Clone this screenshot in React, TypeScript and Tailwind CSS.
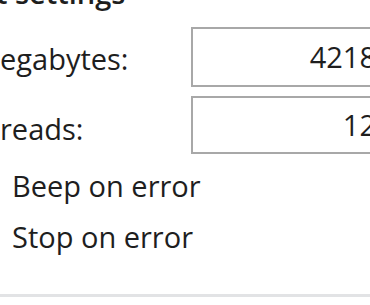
export default function App() {
    return (
        <div className="w-[370px] h-[305px] overflow-hidden bg-white text-[#1e1e1e] font-['Open_Sans',sans-serif]">
            <div className="flex flex-col">
                <h2 className="text-[29px] font-semibold leading-[40px] -mt-[27px] -ml-[4px]">
                    t settings
                </h2>

                <div className="flex items-center mt-[14px] h-[60px]">
                    <span className="w-[191px] text-[29px] leading-none pt-[3px]">egabytes:</span>
                    <div className="flex-1 h-[60px] border-2 border-[#a8a8a8] flex items-center justify-end -mr-[12px] pr-[4px] text-[29px]">
                        4218
                    </div>
                </div>

                <div className="flex items-center mt-[9px] h-[58px]">
                    <span className="w-[191px] text-[29px] leading-none pt-[6px]">reads:</span>
                    <div className="flex-1 h-[58px] border-2 border-[#a8a8a8] flex items-center justify-end -mr-[12px] pr-[4px] text-[29px]">
                        12
                    </div>
                </div>

                <div className="flex flex-col pl-[12px] text-[29px] mt-[6px]">
                    <span className="leading-[52px]">Beep on error</span>
                    <span className="leading-[50px]">Stop on error</span>
                </div>

                <div className="mt-[32px] h-[3px] bg-[#e2e3e5]" />
            </div>
        </div>
    );
}
